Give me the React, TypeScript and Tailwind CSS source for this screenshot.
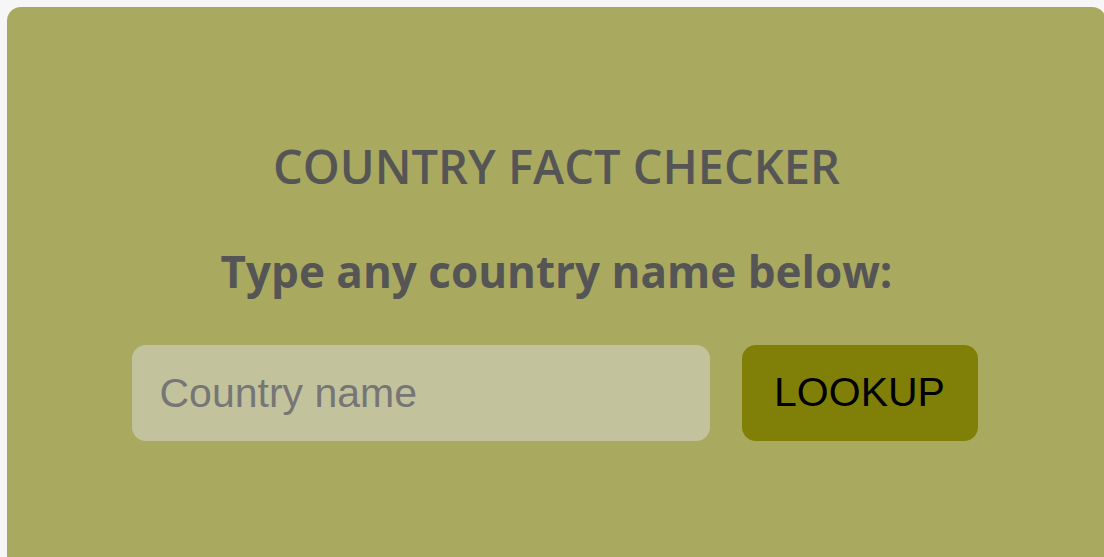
import React from 'react';

const App: React.FC = () => {
  return (
    <div className="h-[557px] w-[1104px] overflow-hidden bg-[#f6f6f6] pl-[7px] pt-[7px]">
      {/* fact checker card */}
      <div className="flex h-[562px] w-[1099px] flex-col items-center rounded-[14px] bg-[#a9a960] pt-[129px] text-[#555555]">
        <h1 className="font-['Open_Sans',sans-serif] text-[47px] font-semibold leading-[60px]">
          COUNTRY FACT CHECKER
        </h1>
        <p className="mt-[45px] font-['Open_Sans',sans-serif] text-[44px] font-bold leading-[60px]">
          Type any country name below:
        </p>
        <div className="mr-[4px] mt-[44px] flex gap-[32px]">
          <input
            type="text"
            placeholder="Country name"
            className="h-[96px] w-[578px] rounded-[14px] bg-[#c2c39c] px-[28px] font-['Liberation_Sans',Arial,sans-serif] text-[41px] text-black outline-none placeholder:text-[#767676]"
          />
          <button className="h-[96px] w-[236px] rounded-[14px] bg-[#808008] font-['Liberation_Sans',Arial,sans-serif] text-[41px] text-black">
            LOOKUP
          </button>
        </div>
      </div>
    </div>
  );
};

export default App;
